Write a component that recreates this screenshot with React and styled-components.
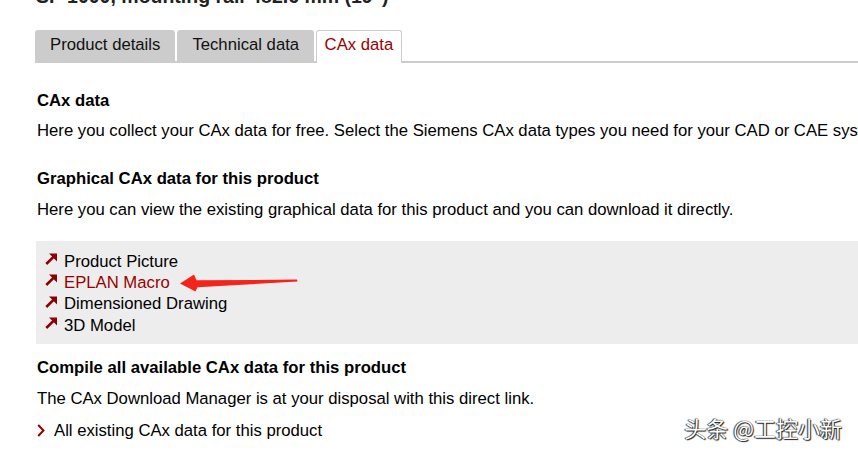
import React from "react";
import styled, { createGlobalStyle } from "styled-components";

const GlobalStyle = createGlobalStyle`
	html, body {
		margin: 0;
		padding: 0;
		background: #fff;
		overflow: hidden;
	}
	body {
		font-family: "Liberation Sans", Arial, sans-serif;
		color: #000;
	}
`;

const Page = styled.div`
	position: relative;
	width: 858px;
	height: 454px;
	overflow: hidden;
	box-sizing: border-box;
	padding-left: 35px;
	white-space: nowrap;
`;

const Title = styled.h1`
	margin: -16px 0 0 1px;
	font-size: 19.5px;
	line-height: 24px;
	font-weight: bold;
	color: #222;
`;

const TabBar = styled.div`
	display: flex;
	align-items: flex-start;
	gap: 2px;
	height: 31px;
	margin-top: 22px;
	border-bottom: 2px solid #ccc;
`;

const Tab = styled.div`
	box-sizing: border-box;
	height: ${(p) => (p.$active ? "33px" : "31px")};
	padding: ${(p) => (p.$active ? "4px 7.5px 0" : "5px 15px 0")};
	font-size: 16.7px;
	line-height: 20px;
	border-radius: 3px 3px 0 0;
	background: ${(p) => (p.$active ? "#fff" : "#ccc")};
	border: ${(p) => (p.$active ? "1px solid #ccc" : "none")};
	border-bottom: none;
	color: ${(p) => (p.$active ? "#990000" : "#111")};
`;

const Content = styled.div`
	padding-left: 2px;
`;

const Heading = styled.h2`
	margin: ${(p) => p.$top}px 0 0;
	font-size: 16.7px;
	line-height: 20px;
	font-weight: bold;
`;

const Text = styled.p`
	margin: ${(p) => p.$top}px 0 0;
	font-size: 16.7px;
	line-height: 20px;
`;

const LinkBox = styled.ul`
	list-style: none;
	margin: 21.5px 0 0 -1px;
	padding: 9.5px 0 8px 9px;
	background: #ededed;
`;

const LinkItem = styled.li`
	font-size: 16.7px;
	line-height: 21.4px;
	color: ${(p) => (p.$active ? "#990000" : "#000")};
`;

const ArrowIcon = styled.svg`
	width: 13px;
	height: 12px;
	margin-right: 6px;
	vertical-align: 1.5px;
`;

const MoreLink = styled.div`
	margin-top: 12.7px;
	font-size: 16.7px;
	line-height: 20px;
`;

const Chevron = styled.svg`
	width: 8px;
	height: 13px;
	margin-right: 9px;
	vertical-align: -1px;
`;

const Pointer = styled.svg`
	position: absolute;
	left: 178px;
	top: 272px;
	width: 122px;
	height: 22px;
`;

const Watermark = styled.div`
	position: absolute;
	right: 16px;
	top: 413px;
	font-family: "Noto Sans CJK SC", sans-serif;
	font-size: 22px;
	line-height: 28px;
	color: #fff;
	text-shadow: 0 0 1px #000, 1px 1px 1px #222, -1px 0 1px #444;
`;

const Arrow = () => (
	<ArrowIcon viewBox="0 0 13 12">
		<path d="M1.3 11 L9 3.3" stroke="#8b0000" strokeWidth="2.6" fill="none" />
		<path d="M4 0.5 H12 V8.5 Z" fill="#8b0000" />
	</ArrowIcon>
);

const links = ["Product Picture", "EPLAN Macro", "Dimensioned Drawing", "3D Model"];

const App = () => {
	return (
		<Page>
			<GlobalStyle />
			<Title>SP 1000, mounting rail 482.6 mm (19")</Title>
			<TabBar>
				<Tab>Product details</Tab>
				<Tab>Technical data</Tab>
				<Tab $active>CAx data</Tab>
			</TabBar>
			<Content>
				<Heading $top={27.5}>CAx data</Heading>
				<Text $top={10}>
					Here you collect your CAx data for free. Select the Siemens CAx data types you need for your CAD or CAE system.
				</Text>
				<Heading $top={28}>Graphical CAx data for this product</Heading>
				<Text $top={11}>
					Here you can view the existing graphical data for this product and you can download it directly.
				</Text>
				<LinkBox>
					{links.map((l) => (
						<LinkItem key={l} $active={l === "EPLAN Macro"}>
							<Arrow />
							{l}
						</LinkItem>
					))}
				</LinkBox>
				<Heading $top={13.7}>Compile all available CAx data for this product</Heading>
				<Text $top={10.7}>The CAx Download Manager is at your disposal with this direct link.</Text>
				<MoreLink>
					<Chevron viewBox="0 0 8 13">
						<path d="M1.2 1 L6.5 6.5 L1.2 12" stroke="#990000" strokeWidth="2" fill="none" />
					</Chevron>
					All existing CAx data for this product
				</MoreLink>
			</Content>
			<Pointer viewBox="0 0 122 22">
				<polygon
					points="2,11.5 16,2.5 18.5,8.3 119,7.6 119.5,9.6 19.5,15.2 17.5,19.5"
					fill="#f5241a"
				/>
			</Pointer>
			<Watermark>头条 @工控小新</Watermark>
		</Page>
	);
};

export default App;
